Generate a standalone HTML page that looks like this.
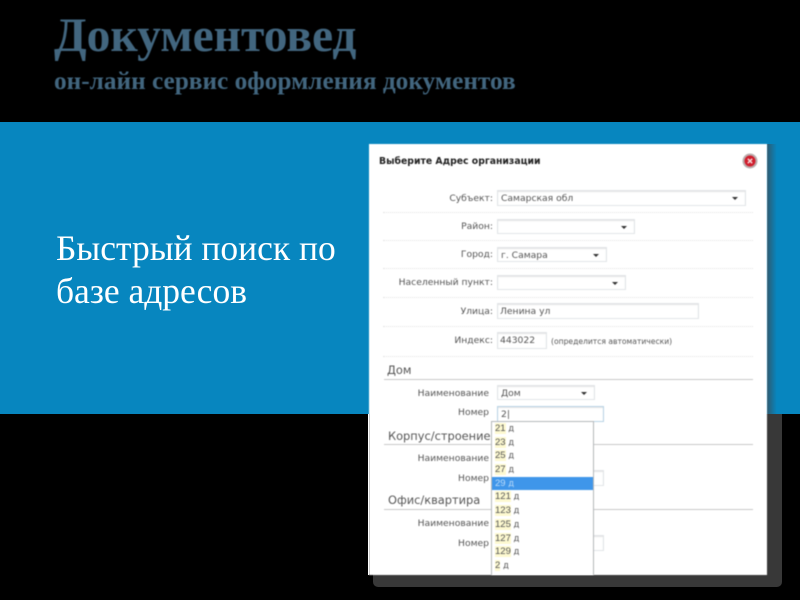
<!DOCTYPE html>
<html lang="ru">
<head>
<meta charset="utf-8">
<title>Документовед</title>
<style>
html,body{margin:0;padding:0;background:#000}
body{width:800px;height:600px;position:relative;overflow:hidden;font-family:"DejaVu Sans","Liberation Sans",sans-serif}
.a{position:absolute;white-space:nowrap}
.band{position:absolute;left:0;top:122px;width:800px;height:292px;background:#0786bf}
.t1{left:54px;top:8px;font:bold 47.5px/56px "Liberation Serif",serif;color:#42667f;filter:blur(.4px)}
.t2{left:54px;top:66.5px;font:bold 25.3px/28px "Liberation Serif",serif;color:#42667f;filter:blur(.6px)}
.lead{left:56px;top:226.5px;font:35.5px/43px "Liberation Serif",serif;color:#fff;white-space:nowrap;filter:blur(.3px)}
.sh1{position:absolute;left:767px;top:144px;width:15px;height:270px;background:linear-gradient(90deg,#2f5a70,#0786bf 65%)}
.sh2{position:absolute;left:373px;top:414px;width:409px;height:173px;background:#383838;border-radius:0 0 5px 5px}
.panel{position:absolute;left:369px;top:144px;width:398px;height:431px;background:#fff;filter:blur(.45px)}
.panel2{position:absolute;left:368px;top:414px;width:1px;height:161px;background:#fff}
.l{position:absolute;font-size:9.2px;line-height:14px;color:#555;white-space:nowrap}
.r{text-align:right}
.b{position:absolute;box-sizing:border-box;background:#fff;border:1px solid #e2e5e8;box-shadow:inset 0 1px 1px #e4e4e4;font-size:9.2px;line-height:14px;color:#555;padding:1px 0 0 3px;white-space:nowrap}
.b i{position:absolute;right:7px;top:6px;width:0;height:0;border:3px solid transparent;border-top:3px solid #333;border-bottom:0}
.d{position:absolute;left:383px;width:370px;border-top:1px dotted #e2e2e2}
.h{position:absolute;left:387px;font-size:11.4px;line-height:16px;color:#555;white-space:nowrap}
.s{position:absolute;left:384px;width:369px;height:1px;background:#c8c8c8}
.list{position:absolute;left:491px;top:421px;width:103px;height:154px;box-sizing:border-box;border:1px solid #b4b8ba;border-bottom:0;background:#fff;font-size:8.5px;color:#555}
.list div{height:13.7px;line-height:14px;padding-left:3px;white-space:nowrap}
.list b{font:normal 9.5px "Liberation Sans",sans-serif;color:#555;background:#fdf9d0}
.list .on{background:#3f96ea;color:#bcdcfa}
.list .on b{background:none;color:#bcdcfa}
.x{position:absolute;left:742px;top:153px;width:16px;height:16px}
</style>
</head>
<body>
<div class="a t1">Документовед</div>
<div class="a t2">он-лайн сервис оформления документов</div>
<div class="band"></div>
<div class="a lead">Быстрый поиск по<br>базе адресов</div>
<div class="sh1"></div>
<div class="sh2"></div>
<div class="panel2"></div>
<div class="panel"></div>

<div style="position:absolute;left:0;top:0;width:800px;height:600px;filter:blur(.4px)">
<div class="a" style="left:379px;top:155px;font:bold 9.3px/14px 'DejaVu Sans',sans-serif;color:#222">Выберите Адрес организации</div>
<svg class="x" viewBox="0 0 16 16"><circle cx="8" cy="8" r="7.5" fill="#b9adad"/><circle cx="8" cy="8" r="5.5" fill="#d01c2c"/><path d="M5.8 5.8L10.2 10.2M10.2 5.8L5.8 10.2" stroke="#f6d6d6" stroke-width="1.5"/></svg>

<div class="l r" style="left:393px;width:100px;top:192px">Субъект:</div>
<div class="b" style="left:497px;top:190px;width:249px;height:16px">Самарская обл<i></i></div>
<div class="d" style="top:212px"></div>
<div class="l r" style="left:393px;width:100px;top:220px">Район:</div>
<div class="b" style="left:497px;top:219px;width:138px;height:15px"><i></i></div>
<div class="d" style="top:240px"></div>
<div class="l r" style="left:393px;width:100px;top:248px">Город:</div>
<div class="b" style="left:497px;top:247px;width:110px;height:15px">г. Самара<i></i></div>
<div class="d" style="top:268px"></div>
<div class="l r" style="left:373px;width:120px;top:276px">Населенный пункт:</div>
<div class="b" style="left:497px;top:275px;width:129px;height:15px"><i></i></div>
<div class="d" style="top:297px"></div>
<div class="l r" style="left:393px;width:100px;top:305px">Улица:</div>
<div class="b" style="left:497px;top:303px;width:202px;height:16px;padding-left:2px">Ленина ул</div>
<div class="d" style="top:326px"></div>
<div class="l r" style="left:393px;width:100px;top:334px">Индекс:</div>
<div class="b" style="left:497px;top:332px;width:50px;height:17px;line-height:14px;padding-left:2px">443022</div>
<div class="l" style="left:551px;top:335px;font-size:7.6px">(определится автоматически)</div>
<div class="d" style="top:356px"></div>

<div class="h" style="top:362px">Дом</div>
<div class="s" style="top:379px"></div>
<div class="l r" style="left:389px;width:100px;top:387px">Наименование</div>
<div class="b" style="left:497px;top:385px;width:98px;height:15px">Дом<i></i></div>
<div class="l r" style="left:389px;width:100px;top:406px">Номер</div>
<div class="b" style="left:497px;top:406px;width:107px;height:16px;border-color:#b9d4e6">2|</div>

<div class="h" style="left:388px;top:428px">Корпус/строение</div>
<div class="s" style="top:444px"></div>
<div class="l r" style="left:389px;width:100px;top:452px">Наименование</div>
<div class="l r" style="left:389px;width:100px;top:472px">Номер</div>
<div class="b" style="left:497px;top:470px;width:107px;height:16px"></div>

<div class="h" style="left:388px;top:492px">Офис/квартира</div>
<div class="s" style="top:509px"></div>
<div class="l r" style="left:389px;width:100px;top:517px">Наименование</div>
<div class="l r" style="left:389px;width:100px;top:537px">Номер</div>
<div class="b" style="left:497px;top:535px;width:107px;height:16px"></div>

<div class="list">
<div><b>21</b> д</div>
<div><b>23</b> д</div>
<div><b>25</b> д</div>
<div><b>27</b> д</div>
<div class="on"><b>29</b> д</div>
<div><b>121</b> д</div>
<div><b>123</b> д</div>
<div><b>125</b> д</div>
<div><b>127</b> д</div>
<div><b>129</b> д</div>
<div><b>2</b> д</div>
</div>
</div>
</body>
</html>
